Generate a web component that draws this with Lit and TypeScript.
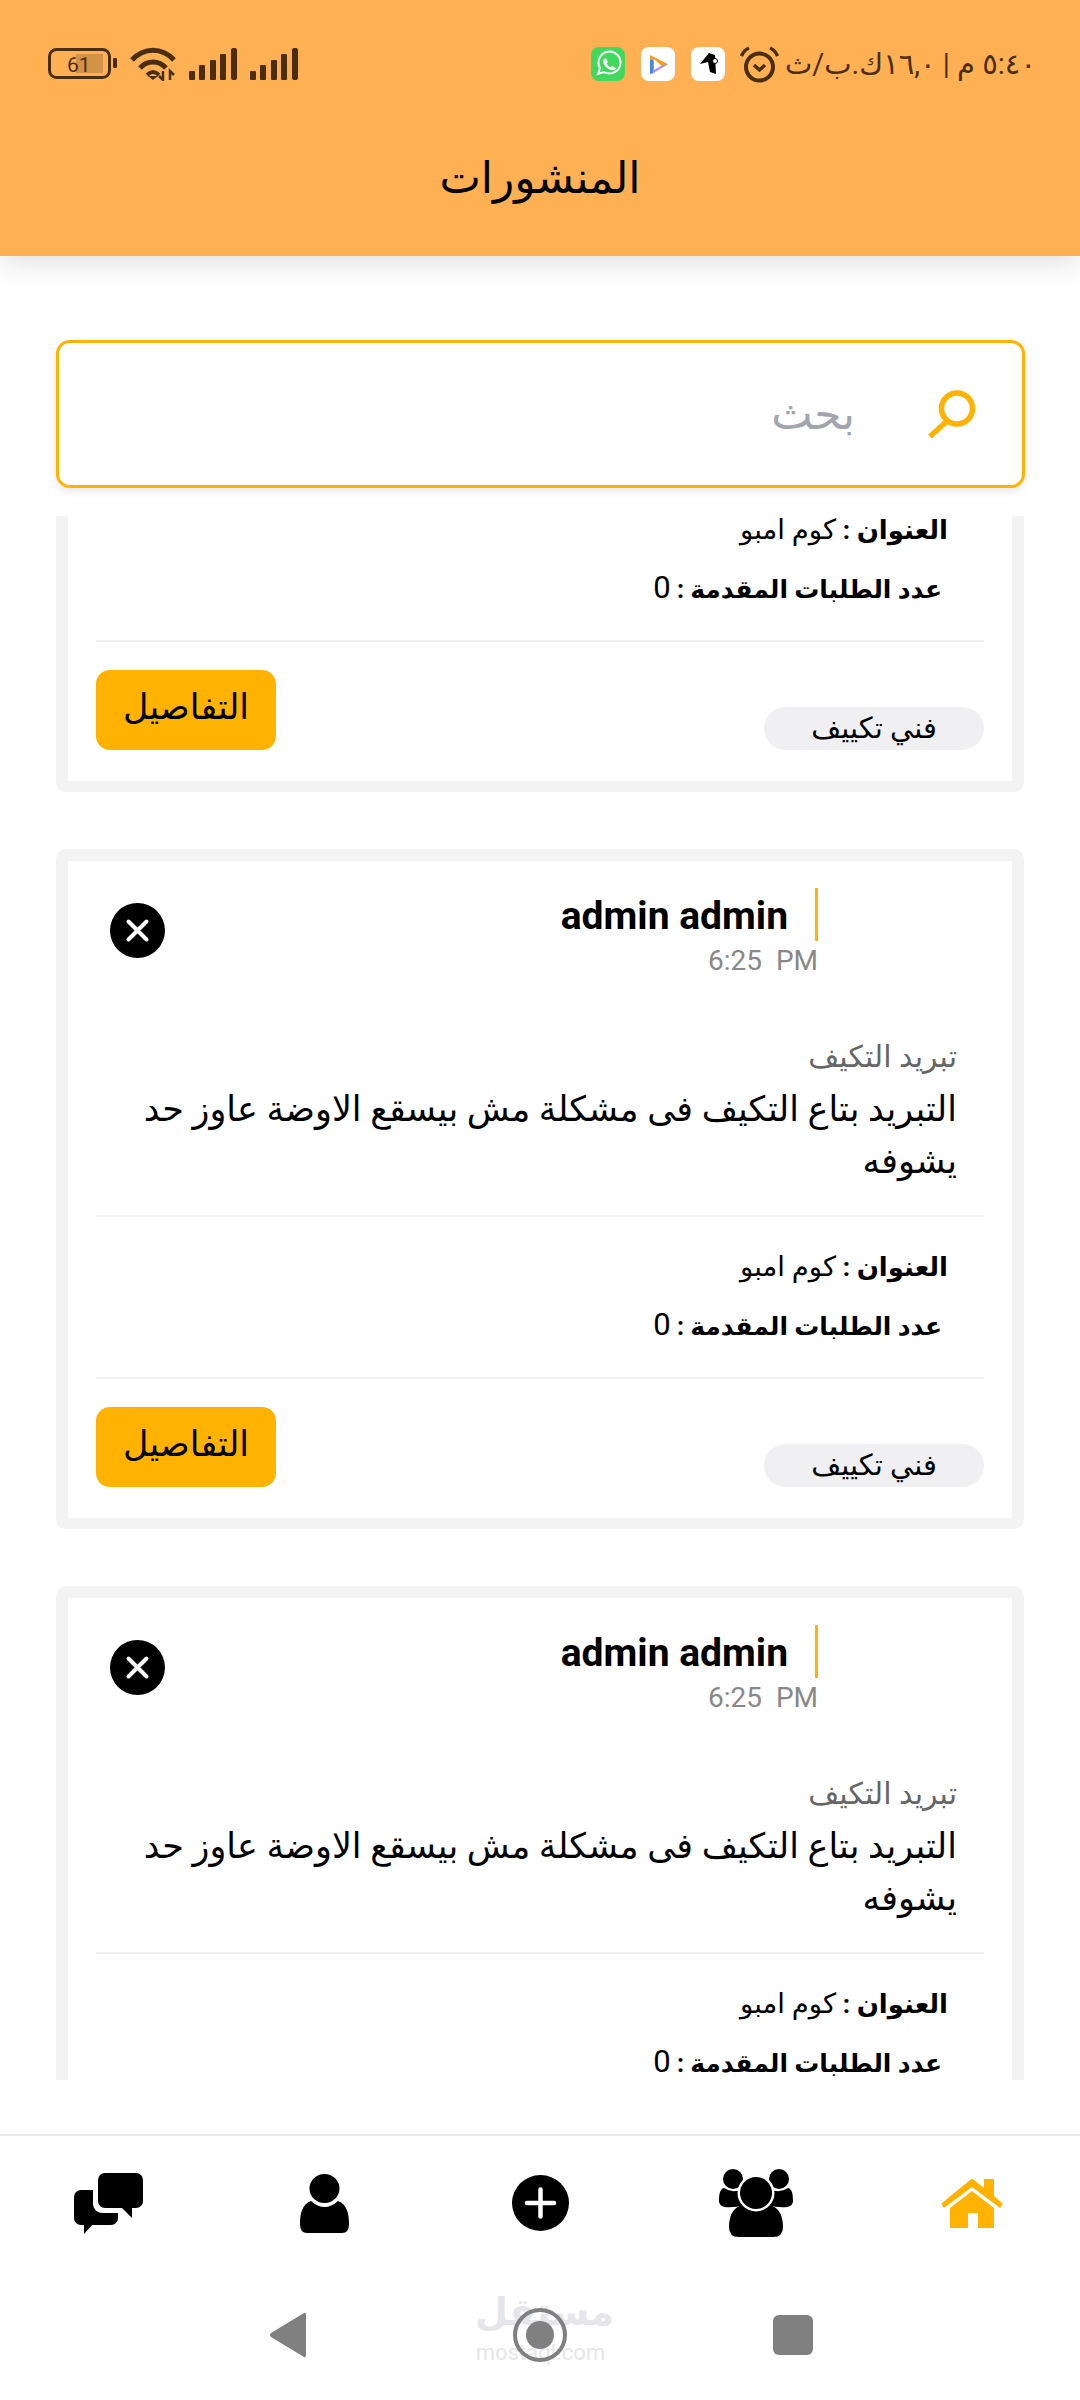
import { LitElement, html, css, svg, unsafeCSS } from 'lit';
import { customElement } from 'lit/decorators.js';

const BROWN = '#4a2e12';
const AMBER = '#ffb300';

const batteryIcon = svg`<svg width="69" height="32" viewBox="0 0 69 32">
  <rect x="28" y="6" width="27" height="19" fill="#d39246"/>
  <rect x="1.5" y="1.5" width="60" height="28" rx="7" fill="none" stroke="${BROWN}" stroke-width="3"/>
  <rect x="65" y="10" width="4" height="10" rx="1" fill="${BROWN}"/>
  <text x="19" y="24" font-family="Roboto, sans-serif" font-size="21" fill="${BROWN}">61</text>
</svg>`;

const wifiIcon = svg`<svg width="46" height="34" viewBox="0 0 46 34" fill="none" stroke="${BROWN}" stroke-width="5">
  <path d="M2 13 C14 0 32 0 44 13"/>
  <path d="M10 21 C17 13 29 13 36 21"/>
  <path d="M17 28 Q23 22 29 28" stroke-width="4"/>
  <path d="M23 33 L18 29 H28Z" fill="${BROWN}" stroke="none"/>
  <path d="M33 24 V33 L29 29 M40 33 V24 L44 28" stroke-width="2.5"/>
</svg>`;

const signalIcon = svg`<svg width="48" height="32" viewBox="0 0 48 32" fill="${BROWN}">
  <rect x="0" y="23" width="6" height="9" rx="1"/>
  <rect x="10" y="17" width="6" height="15" rx="1"/>
  <rect x="21" y="12" width="6" height="20" rx="1"/>
  <rect x="31" y="6" width="6" height="26" rx="1"/>
  <rect x="42" y="0" width="6" height="32" rx="2"/>
</svg>`;

const whatsappIcon = svg`<svg width="34" height="34" viewBox="0 0 34 34">
  <rect width="34" height="34" rx="8" fill="#40d95d"/>
  <path d="M7 27 L9 21 A11 11 0 1 1 13 25 Z" fill="none" stroke="#fff" stroke-width="2"/>
  <path d="M13 12 L15 11 L17 15 L15.5 16.5 Q17 19.5 20 20.5 L21.5 19 L25 21 L24 23 Q18 24 14 19 Q11 15 13 12Z" fill="#fff"/>
</svg>`;

const playIcon = svg`<svg width="34" height="34" viewBox="0 0 34 34">
  <rect width="34" height="34" rx="8" fill="#fff"/>
  <path d="M9 8 L27 17 L22 20 L13 12 V18 H9Z" fill="#f0a020"/>
  <path d="M9 15 H13 V23 L22 18 L27 17 L11 27 H9Z" fill="#a98bf2"/>
  <path d="M9 13 H12 V26 H9Z" fill="#4a86e0"/>
</svg>`;

const runnerIcon = svg`<svg width="34" height="34" viewBox="0 0 34 34">
  <rect width="34" height="34" rx="8" fill="#fff"/>
  <path d="M18 6 L24 8 L25 27 L19 25 L17 15 L9 17 Z" fill="#000"/>
  <circle cx="24" cy="14" r="2.5" fill="#fff" stroke="#000"/>
</svg>`;

const alarmIcon = svg`<svg width="39" height="37" viewBox="0 0 39 37" fill="none" stroke="${BROWN}">
  <circle cx="19.5" cy="21" r="13.5" stroke-width="4"/>
  <path d="M1.5 10 Q4 4 9 2 M37.5 10 Q35 4 30 2" stroke-width="3.5"/>
  <path d="M14 19 L19.5 24 L25 19" stroke-width="3.5"/>
</svg>`;

const searchIcon = svg`<svg width="49" height="48" viewBox="0 0 49 48" fill="none" stroke="${AMBER}" stroke-width="5.5">
  <circle cx="30" cy="18.5" r="15.5"/>
  <path d="M20 31 L3 46.5"/>
</svg>`;

const closeIcon = svg`<svg width="55" height="55" viewBox="0 0 55 55">
  <circle cx="27.5" cy="27.5" r="27.5" fill="#000"/>
  <path d="M18.5 18.5 L36.5 36.5 M36.5 18.5 L18.5 36.5" stroke="#fff" stroke-width="4" stroke-linecap="round"/>
</svg>`;

const chatIcon = svg`<svg width="69" height="61" viewBox="0 0 69 61">
  <rect x="0" y="17" width="44" height="35" rx="7" fill="#000"/>
  <path d="M10 50 H20 L10 61Z" fill="#000"/>
  <rect x="19" y="-4" width="54" height="44" rx="9" fill="#fff"/>
  <rect x="24" y="0" width="45" height="35" rx="7" fill="#000"/>
  <path d="M46 33 H58 V45Z" fill="#000"/>
</svg>`;

const userIcon = svg`<svg width="49" height="59" viewBox="0 0 49 59">
  <ellipse cx="24.5" cy="14.5" rx="15" ry="14.5" fill="#000"/>
  <path d="M0 50 C0 40 2 30 11 27 Q24.5 39 38 27 C47 30 49 40 49 50 Q49 59 42 59 H7 Q0 59 0 50Z" fill="#000"/>
</svg>`;

const addIcon = svg`<svg width="57" height="56" viewBox="0 0 57 56">
  <ellipse cx="28.5" cy="28" rx="28.5" ry="28" fill="#000"/>
  <path d="M15 28 H42 M28.5 14.5 V41.5" stroke="#fff" stroke-width="4.5" stroke-linecap="round"/>
</svg>`;

const groupIcon = svg`<svg width="74" height="68" viewBox="0 0 74 68">
  <circle cx="14" cy="10" r="10" fill="#000"/>
  <circle cx="60" cy="10" r="10" fill="#000"/>
  <path d="M0 32 C0 25 1 20 5 19 Q14 25 23 20 L26 36 Q14 39 6 38 Q0 37 0 32Z" fill="#000"/>
  <path d="M74 32 C74 25 73 20 69 19 Q60 25 51 20 L48 36 Q60 39 68 38 Q74 37 74 32Z" fill="#000"/>
  <path d="M10 58 C10 48 13 40 22 36 H52 C61 40 64 48 64 58 Q64 68 54 68 H20 Q10 68 10 58Z" fill="#000"/>
  <circle cx="37" cy="24" r="18.5" fill="#fff"/>
  <circle cx="37" cy="24" r="16" fill="#000"/>
</svg>`;

const homeIcon = svg`<svg width="62" height="50" viewBox="0 0 62 50" fill="${AMBER}">
  <path d="M29 2 Q31 0 33 2 L43 10 V1 H53 V18 L61 25 Q62 26 61 27 L59 30 L31 9 L3 30 L1 27 Q0 26 1 25Z"/>
  <path d="M31 13 L53 30 V50 H37 V35 H27 V50 H9 V30Z"/>
</svg>`;

@customElement('post-card')
export class PostCard extends LitElement {
  static styles = css`
    :host {
      display: block;
    }

    .card {
      box-sizing: border-box;
      height: 680px;
      border: 12px solid #f3f3f4;
      border-bottom-width: 11px;
      border-radius: 10px;
      background: #fff;
      padding: 27px 28px 0;
      font-family: 'Roboto', 'DejaVu Sans', sans-serif;
      color: #000;
    }

    .head {
      display: flex;
      align-items: center;
      justify-content: space-between;
      height: 90px;
    }

    .author {
      margin-inline-start: 166px;
    }

    .name {
      border-right: 3px solid ${unsafeCSS(AMBER)};
      height: 53px;
      line-height: 57px;
      padding-right: 27px;
      font-size: 39px;
      font-weight: 700;
    }

    .time {
      height: 34px;
      line-height: 34px;
      margin-top: 3px;
      font-size: 28px;
      color: #888;
      white-space: pre;
      text-align: right;
    }

    .close {
      display: flex;
      margin-inline-end: 14px;
      margin-top: -5px;
    }

    .body {
      padding: 59px 27px 0 0;
    }

    .category {
      line-height: 40px;
      font-size: 30px;
      color: #666;
    }

    .desc {
      margin-top: 7px;
      line-height: 52px;
      font-size: 35px;
      padding-inline-end: 12px;
    }

    .rule {
      height: 2px;
      background: #f0f0f1;
    }

    .rule.first {
      margin-top: 27px;
    }

    .rule.second {
      margin-top: 30px;
    }

    .info {
      line-height: 40px;
      font-size: 27.5px;
      padding-inline-start: 36px;
      margin-top: 30px;
    }

    .info + .info {
      margin-top: 18px;
      padding-inline-start: 42px;
    }

    .info b {
      font-size: 26px;
      font-weight: 700;
    }

    .info + .info b {
      font-size: 25px;
    }

    .count {
      font-size: 31px;
    }

    .foot {
      display: flex;
      align-items: flex-end;
      justify-content: space-between;
      margin-top: 28px;
    }

    .chip {
      width: 220px;
      height: 43px;
      line-height: 43px;
      border-radius: 22px;
      background: #f0f0f2;
      font-size: 29px;
      text-align: center;
    }

    .details {
      width: 180px;
      height: 80px;
      line-height: 76px;
      border-radius: 14px;
      background: ${unsafeCSS(AMBER)};
      font-size: 35px;
      text-align: center;
    }
  `;

  render() {
    return html`
      <div class="card" dir="rtl">
        <div class="head">
          <div class="author">
            <div class="name" dir="ltr">admin admin</div>
            <div class="time" dir="ltr">6:25  PM</div>
          </div>
          <div class="close">${closeIcon}</div>
        </div>
        <div class="body">
          <div class="category">تبريد التكيف</div>
          <div class="desc">التبريد بتاع التكيف فى مشكلة مش بيسقع الاوضة عاوز حد يشوفه</div>
        </div>
        <div class="rule first"></div>
        <div class="info"><b>العنوان :</b> كوم امبو</div>
        <div class="info"><b>عدد الطلبات المقدمة : </b><span class="count">0</span></div>
        <div class="rule second"></div>
        <div class="foot">
          <div class="chip">فني تكييف</div>
          <div class="details">التفاصيل</div>
        </div>
      </div>
    `;
  }
}

@customElement('app-root')
export class AppRoot extends LitElement {
  static styles = css`
    :host {
      display: block;
    }

    .page {
      display: flex;
      flex-direction: column;
      width: 1080px;
      height: 2400px;
      overflow: hidden;
      background: #fff;
      font-family: 'Roboto', 'DejaVu Sans', sans-serif;
    }

    .header {
      flex: none;
      height: 256px;
      background: #ffb052;
      box-shadow: 0 6px 30px rgba(0, 0, 0, 0.13);
      position: relative;
      z-index: 2;
    }

    .status {
      display: flex;
      align-items: center;
      justify-content: space-between;
      height: 38px;
      padding: 45px 44px 0 48px;
    }

    .status-left {
      display: flex;
      align-items: center;
      gap: 13px;
    }

    .status-right {
      display: flex;
      align-items: center;
      gap: 15px;
    }

    .apps {
      display: flex;
      gap: 16px;
    }

    .speed {
      font-size: 29px;
      color: ${unsafeCSS(BROWN)};
      white-space: nowrap;
      margin-left: -9px;
    }

    .title {
      margin-top: 60px;
      text-align: center;
      font-size: 44px;
      line-height: 70px;
      color: #000;
    }

    .search {
      flex: none;
      box-sizing: border-box;
      display: flex;
      align-items: center;
      gap: 72px;
      height: 148px;
      margin: 84px 55px 0 56px;
      padding: 0 46px 0 0;
      border: 3px solid ${unsafeCSS(AMBER)};
      border-radius: 14px;
      background: #fff;
      box-shadow: 0 3px 10px rgba(0, 0, 0, 0.1);
      position: relative;
      z-index: 1;
    }

    .search-hint {
      font-size: 44px;
      color: #a3a5ae;
    }

    .list {
      flex: 1;
      margin-top: 28px;
      padding: 0 56px;
      overflow: hidden;
    }

    /* list is scrolled, the first card is mostly above the fold */
    .scroller {
      display: flex;
      flex-direction: column;
      gap: 57px;
      margin-top: -404px;
    }

    .tabs {
      flex: none;
      display: grid;
      grid-template-columns: repeat(5, 1fr);
      align-items: center;
      justify-items: center;
      height: 134px;
      margin-top: 54px;
      border-top: 2px solid #eaeaec;
    }

    .tab {
      display: flex;
    }

    .system {
      flex: none;
      display: flex;
      align-items: center;
      justify-content: center;
      height: 130px;
      position: relative;
    }

    .system-keys {
      display: flex;
      align-items: center;
      justify-content: space-between;
      width: 543px;
      margin-left: 3px;
      position: relative;
    }

    /* site watermark burnt into the screenshot, sits behind the home key */
    .mark {
      position: absolute;
      left: 475px;
      top: 20px;
      width: 131px;
      text-align: center;
      color: #e6e6ea;
      font-weight: 700;
    }

    .mark-ar {
      font-size: 38px;
      line-height: 44px;
    }

    .mark-en {
      margin-top: 8px;
      font-family: 'Roboto', sans-serif;
      font-weight: 400;
      font-size: 22px;
      line-height: 22px;
    }
  `;

  render() {
    return html`
      <div class="page">
        <div class="header">
          <div class="status">
            <div class="status-left">
              ${batteryIcon}${wifiIcon}${signalIcon}${signalIcon}
            </div>
            <div class="status-right">
              <div class="apps">${whatsappIcon}${playIcon}${runnerIcon}</div>
              ${alarmIcon}
              <div class="speed" dir="rtl">٥:٤٠ م | ١٦,٠ك.ب/ث</div>
            </div>
          </div>
          <div class="title">المنشورات</div>
        </div>

        <div class="search" dir="rtl">
          ${searchIcon}
          <div class="search-hint">بحث</div>
        </div>

        <div class="list">
          <div class="scroller">
            <post-card></post-card>
            <post-card></post-card>
            <post-card></post-card>
          </div>
        </div>

        <div class="tabs">
          <div class="tab">${chatIcon}</div>
          <div class="tab">${userIcon}</div>
          <div class="tab">${addIcon}</div>
          <div class="tab">${groupIcon}</div>
          <div class="tab">${homeIcon}</div>
        </div>

        <div class="system">
          <div class="mark">
            <div class="mark-ar">مستقل</div>
            <div class="mark-en">mostaql.com</div>
          </div>
          <div class="system-keys">
            <svg width="36" height="46" viewBox="0 0 36 46"><path d="M34 1 Q36 0 36 3 V43 Q36 46 34 45 L1 25 Q-1 23 1 21Z" fill="#808080"/></svg>
            <svg width="54" height="54" viewBox="0 0 54 54">
              <circle cx="27" cy="27" r="25" fill="none" stroke="#808080" stroke-width="4"/>
              <circle cx="27" cy="27" r="14" fill="#808080"/>
            </svg>
            <svg width="40" height="40" viewBox="0 0 40 40"><rect width="40" height="40" rx="6" fill="#808080"/></svg>
          </div>
        </div>
      </div>
    `;
  }
}
